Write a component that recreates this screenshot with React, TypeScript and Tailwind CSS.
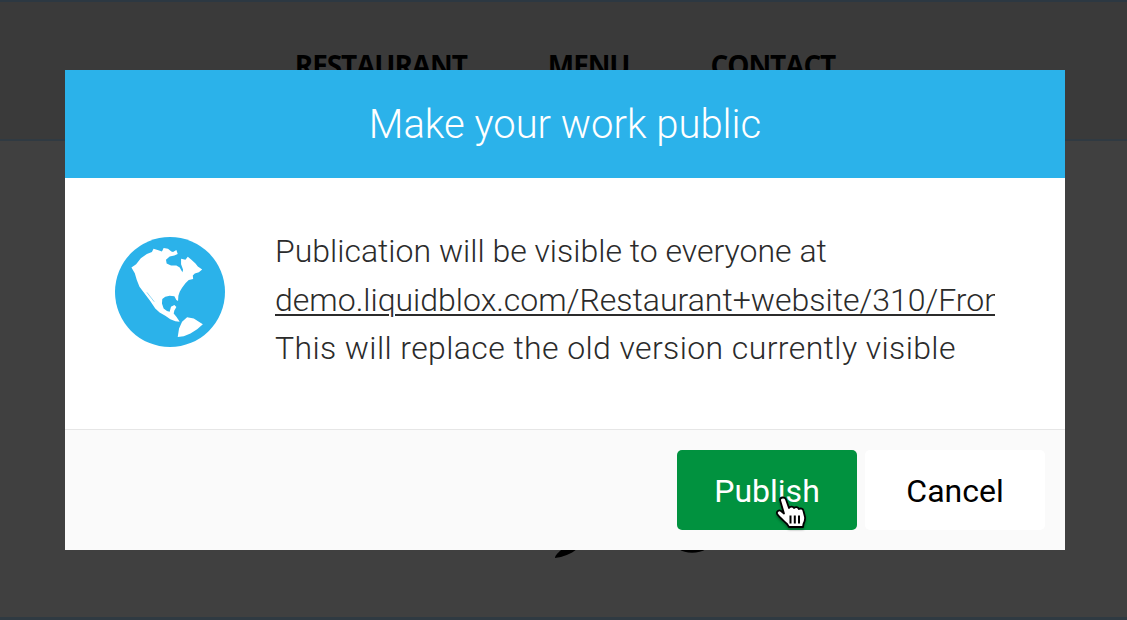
import React from "react";

const Globe = () => (
  <svg viewBox="45 37 328 328" className="h-[110px] w-[110px] shrink-0">
    <circle cx="209" cy="201" r="164" fill="#2bb2ea" />
    <path
      fill="#fff"
      d="M94 128L108 118L122 100L140 88L155 82L160 72L172 76L185 80L190 70L203 72L213 80L218 82L228 76L232 88L222 92L208 95L197 105L199 116L212 122L228 122L238 128L246 142L248 135L242 118L242 102L255 105L262 96L272 104L285 116L292 125L305 134L295 142L283 146L277 152L278 162L265 165L255 175L245 188L238 200L234 212L233 228L228 225L222 214L208 212L195 215L186 222L185 235L190 250L200 258L208 260L212 245L222 240L228 246L222 256L220 265L228 275L238 290L225 288L210 282L195 272L178 262L165 250L150 228L132 204L118 185L110 165L104 145Z"
    />
    <path fill="none" stroke="#2bb2ea" strokeWidth="1.500" d="M140 202L162 230" />
    <path
      fill="#fff"
      d="M232 335L236 310L245 290L260 276L280 280L295 290L307 297L290 312L270 325L250 333Z"
    />
  </svg>
);

const HandCursor = () => (
  <svg
    viewBox="0 0 30 32"
    className="pointer-events-none absolute left-[776px] top-[496px] h-8 w-[30px] drop-shadow-[0_2px_1px_rgba(0,0,0,0.3)]"
  >
    <path
      fill="#fff"
      stroke="#000"
      strokeWidth="1.8"
      strokeLinejoin="round"
      d="M4 4C4 1 9 .5 10 3.500L13 12C14.500 10 17 10.500 18 12C19.500 10.500 22 11 23 13C24.500 12 27 12.500 27.500 15L29 21C29.500 24 28.500 26 27.500 28L27 31L13 31L11 28C8 25 3 21 1.200 18C0 15.500 3 13.500 5 15L8 17.500Z"
    />
    <path
      fill="none"
      stroke="#000"
      strokeWidth="2"
      d="M14.500 19.500V27.500M18.800 19.500V27.500M23 19.500V27.500"
    />
  </svg>
);

export default function App() {
  return (
    <div
      className="relative flex h-[620px] w-full flex-col overflow-hidden bg-[#404040]"
      style={{ fontFamily: "Roboto, sans-serif" }}
    >
      <header className="flex h-[141px] shrink-0 justify-center gap-[81px] border-y-2 border-t-[#2c3842] border-b-[#303a42] bg-[#3a3a3a] pl-[3px] pt-[45px]">
        {["RESTAURANT", "MENU", "CONTACT"].map((item) => (
          <span
            key={item}
            className="text-[28px] font-bold leading-[36px] tracking-[-1.1px] text-black"
            style={{ fontFamily: "'Open Sans', sans-serif" }}
          >
            {item}
          </span>
        ))}
      </header>
      <main className="flex-1" />
      <div className="h-[3px] bg-[#2f3a42]" />

      {/* bits of the page heading that stick out under the dialog */}
      <svg
        viewBox="0 0 160 10"
        className="absolute left-[550px] top-[549px] h-[10px] w-40"
      >
        <path d="M5 9c8-1 16-4 22-9H12c-3 3-7 6-7 9z" fill="#000" />
        <path d="M129 0c6 5 20 5 27 0z" fill="#000" />
      </svg>

      <div className="absolute left-[65px] top-[70px] flex h-[480px] w-[1000px] flex-col bg-white">
        <div className="flex h-[108px] shrink-0 items-center justify-center bg-[#2bb2ea] pt-[2px] text-[40px] font-light text-white">
          Make your work public
        </div>
        <div className="flex h-[251px] shrink-0 items-start gap-[50px] pl-[50px] pt-[49px]">
          <div className="pt-[10px]">
            <Globe />
          </div>
          <div className="w-[720px] overflow-hidden whitespace-nowrap text-[32px] font-light leading-[48.500px] text-[#2b2b2b]">
            <p>Publication will be visible to everyone at</p>
            <p className="underline decoration-2 underline-offset-[3px]">
              demo.liquidblox.com/Restaurant+website/310/Front
            </p>
            <p className="tracking-[0.39px]">
              This will replace the old version currently visible
            </p>
          </div>
        </div>
        <div className="flex flex-1 justify-end gap-2 border-t border-[#e6e6e6] bg-[#fafafa] pr-5 pt-5">
          <button className="h-20 w-[180px] rounded-[5px] bg-[#01923f] pt-[2px] text-[32px] text-white">
            Publish
          </button>
          <button className="h-20 w-[180px] rounded-[5px] bg-white pt-[2px] text-[32px] text-black">
            Cancel
          </button>
        </div>
      </div>

      <HandCursor />
    </div>
  );
}
